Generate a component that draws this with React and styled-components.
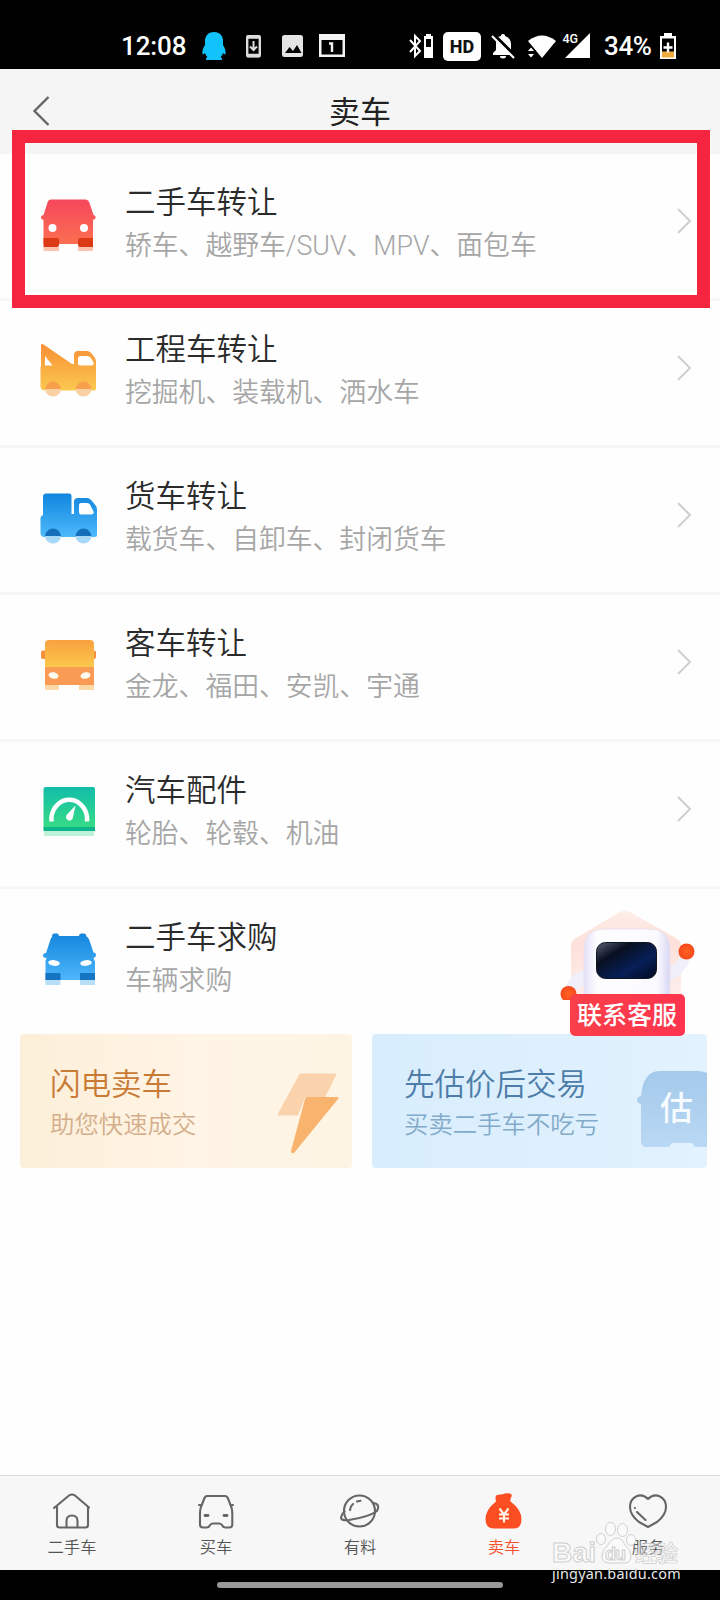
import React from 'react';
import styled, { createGlobalStyle } from 'styled-components';

const GlobalStyle = createGlobalStyle`
  body {
    margin: 0;
    background: #fefefe;
  }
  * {
    box-sizing: border-box;
  }
`;

const Screen = styled.div`
  position: relative;
  display: flex;
  flex-direction: column;
  width: 720px;
  height: 1600px;
  overflow: hidden;
  background: #fefefe;
  font-family: Roboto, 'Noto Sans CJK SC', sans-serif;
  white-space: nowrap;
`;

const StatusBar = styled.div`
  display: flex;
  align-items: center;
  flex: none;
  height: 69px;
  padding: 23px 0 0 121px;
  background: #000;
  color: #fff;
`;

const StatusText = styled.span`
  flex: none;
  width: ${props => props.width};
  margin-left: ${props => props.gap || 0};
  font-size: 26px;
  line-height: 46px;
  font-weight: 500;
  letter-spacing: ${props => props.spacing || 0};
`;

const Glyph = styled.svg`
  flex: none;
  display: block;
  margin-left: ${props => props.$gap || 0};
`;

const HdBadge = styled.span`
  flex: none;
  width: 38px;
  height: 29px;
  margin-left: 9px;
  border-radius: 5px;
  background: #fff;
  color: #111;
  font-size: 18px;
  line-height: 29px;
  font-weight: 800;
  text-align: center;
`;

const Header = styled.header`
  display: grid;
  grid-template-columns: 60px 1fr 60px;
  flex: none;
  height: 85px;
  background: #f5f5f5;
`;

const BackIcon = styled.svg`
  margin: 24px 0 0 30px;
`;

const PageTitle = styled.h1`
  margin: 24px 0 0;
  color: #222;
  font-size: 31px;
  line-height: 40px;
  font-weight: 400;
  text-align: center;
`;

const Row = styled.div`
  display: flex;
  flex: none;
  height: 147px;
  padding: 0 26px 0 38px;
  border-bottom: 3px solid ${props => props.last ? 'transparent' : '#f7f7f7'};
`;

const RowIcon = styled.svg`
  flex: none;
  width: 60px;
  height: 60px;
  margin-top: 41px;
`;

const RowText = styled.div`
  flex: 1;
  padding: 29px 0 0 27px;
`;

const RowTitle = styled.div`
  color: #2b2b2b;
  font-size: 30.5px;
  line-height: 40px;
  font-weight: 350;
`;

const RowSub = styled.div`
  margin-top: 3px;
  color: #a6a6a6;
  font-size: 26.8px;
  line-height: 40px;
  font-weight: 350;
`;

const Chevron = styled.svg`
  flex: none;
  margin-top: 52px;
`;

const Highlight = styled.div`
  position: absolute;
  left: 12px;
  top: 130px;
  width: 698px;
  height: 178px;
  border: 13px solid #f5253f;
`;

const Cards = styled.div`
  display: flex;
  gap: 20px;
  flex: none;
  padding: 0 13px 0 20px;
  margin-top: -2px;
`;

const Card = styled.div`
  display: flex;
  justify-content: space-between;
  width: ${props => props.width};
  height: 134px;
  padding-left: ${props => props.indent};
  border-radius: 4px;
  background: ${props => props.bg};
`;

const CardText = styled.div`
  padding-top: 30px;
`;

const CardTitle = styled.div`
  color: ${props => props.color};
  font-size: 30.5px;
  line-height: 42px;
  font-weight: 350;
`;

const CardSub = styled.div`
  color: ${props => props.color};
  font-size: 24.4px;
  line-height: 38px;
  font-weight: 350;
`;

const Service = styled.div`
  position: absolute;
  left: 550px;
  top: 900px;
  display: flex;
  flex-direction: column;
  align-items: center;
  width: 156px;
`;

const ServiceBadge = styled.div`
  width: 115px;
  height: 42px;
  margin: -6px 0 0 -2px;
  border-radius: 5px;
  background: linear-gradient(100deg, #f93f48, #ff344f);
  color: #fff;
  font-size: 25px;
  line-height: 43px;
  font-weight: 500;
  text-align: center;
`;

const TabBar = styled.nav`
  display: grid;
  grid-template-columns: repeat(5, 1fr);
  flex: none;
  height: 95px;
  margin-top: auto;
  border-top: 1px solid #dcdcdc;
  background: #f7f7f7;
`;

const Tab = styled.div`
  display: flex;
  flex-direction: column;
  align-items: center;
  padding-top: 15px;
  color: ${props => props.active ? '#f4502a' : '#555'};
  font-size: 16.3px;
  line-height: 24px;
  font-weight: 350;
`;

const TabIcon = styled.svg`
  width: 40px;
  height: 40px;
  margin-bottom: 5px;
  fill: none;
  stroke: #666;
  stroke-width: 2.1;
  stroke-linecap: round;
  stroke-linejoin: round;
`;

const HomeArea = styled.div`
  flex: none;
  display: flex;
  justify-content: center;
  height: 30px;
  padding-top: 12px;
  background: #000;
`;

const HomePill = styled.div`
  width: 286px;
  height: 6px;
  border-radius: 3px;
  background: #999;
`;

const Watermark = styled.div`
  position: absolute;
  left: 552px;
  top: 1520px;
  width: 130px;
`;

const WatermarkSvg = styled.svg`
  display: block;
  overflow: visible;
  font-family: 'Liberation Sans', 'Noto Sans CJK SC', sans-serif;
  font-weight: 700;
`;

const WatermarkUrl = styled.div`
  margin-top: -2px;
  color: #e8e8e8;
  font-family: 'Noto Sans', sans-serif;
  font-size: 14.4px;
  line-height: 20px;
  letter-spacing: 0.25px;
`;

const Gradient = ({ id, from, to }) => (
  <defs>
    <linearGradient id={id} x1='0' y1='0' x2='0' y2='1'>
      <stop offset='0' stopColor={from} />
      <stop offset='1' stopColor={to} />
    </linearGradient>
  </defs>
);

const RedCar = () => (
  <RowIcon viewBox='0 0 60 60'>
    <Gradient id='redCar' from='#f6475c' to='#fb6f51' />
    <path d='M5.500 52h15.500v4h-15.500zM40 52h15v4h-15z' fill='#fbb39c' opacity='.8' />
    <path d='M13 4.500h34q3.500 0 4.500 3.500l4 12q2.500.5 2 3-.4 2-2.500 1.500V49H5.500V24.500q-2 .5-2.500-1.500-.4-2.500 2.500-3L9.500 7.500q1-3 3.500-3z' fill='url(#redCar)' />
    <path d='M5.500 43H19q2 0 2 2v5q0 2-2 2H5.500zM55 43H42q-2 0-2 2v5q0 2 2 2h13z' fill='#dc3a14' />
    <circle cx='14.500' cy='33' r='4' fill='#fff' />
    <circle cx='46' cy='33' r='4' fill='#fff' />
  </RowIcon>
);

const CraneTruck = () => (
  <RowIcon viewBox='0 0 60 60'>
    <Gradient id='crane' from='#f88f35' to='#fbc94f' />
    <path fillRule='evenodd' d='M5.500 2.500q-2-1-2.500.5V24q-.5.5-.5 2v18q0 4 4 4.500H56q2 0 2-2V20q0-2-1-4l-3-4q-2-3-5-3H40q-4 0-4 4v9h-2zM7 14 14.500 23.500H7zM42.500 14h7q2 0 3 1.500l2.500 4q2 4-2 4H42q-2 0-2-2v-5q0-2.500 2.500-2.500z' fill='url(#crane)' />
    <path d='M7 48a8 8.500 0 0 1 16 0zM37.500 48a8 8.500 0 0 1 16 0z' fill='#f8a04e' />
    <path d='M7 47a8 7.500 0 0 0 16 0zM37.500 47a8 7.500 0 0 0 16 0z' fill='#fad0a5' />
  </RowIcon>
);

const BoxTruck = () => (
  <RowIcon viewBox='0 0 60 60'>
    <Gradient id='boxTruck' from='#0f85de' to='#4ebafb' />
    <path fillRule='evenodd' d='M8 4.500h23q2.500 0 2.500 3V25h2.500V13q0-4 4-4h9q3 0 5 3l4 5q1 1 1 4v25q0 2-2 2H6.500q-4 0-4-4V29q0-2 2.500-3V8q0-3.500 3-3.500zM43 14q-2 0-2 2v7q0 2.500 2 2.500h10q4 0 2-4l-3-6q-1-1.500-3-1.500z' fill='url(#boxTruck)' />
    <path d='M7 48a8 8.500 0 0 1 16 0zM37.500 48a8 8.500 0 0 1 16 0z' fill='#136fb8' />
    <path d='M7 47a8 7.500 0 0 0 16 0zM37.500 47a8 7.500 0 0 0 16 0z' fill='#a8d8f7' />
  </RowIcon>
);

const Bus = () => (
  <RowIcon viewBox='0 0 60 60'>
    <Gradient id='bus' from='#f9a13e' to='#fbc84d' />
    <path d='M3 16q0-1.500 2-1.500h50q3 0 3 1.500v5q0 2-3 2H5q-2 0-2-2z' fill='#f9903f' />
    <path d='M7 48h14v6H7zM41 48h15v6H41z' fill='#fcd9a6' />
    <path d='M11 4h41q4 0 4 4v23H7V8q0-4 4-4z' fill='url(#bus)' />
    <path d='M7 31h49v18H7z' fill='#f99b55' />
    <ellipse cx='15.500' cy='39.500' rx='5' ry='3.200' fill='#fffaf0' transform='rotate(12 15.500 39.500)' />
    <ellipse cx='47.500' cy='39.500' rx='5' ry='3.200' fill='#fffaf0' transform='rotate(-12 47.500 39.500)' />
  </RowIcon>
);

const Gauge = () => (
  <RowIcon viewBox='0 0 60 60'>
    <Gradient id='gauge' from='#12bda9' to='#37dc85' />
    <path d='M6 48h50v5H6z' fill='#bdf1d8' />
    <path d='M8 4h47q2 0 2 2v39H5.500V6q0-2 2.500-2z' fill='url(#gauge)' />
    <path d='M5.500 44H57v4H5.500z' fill='#0fb58a' />
    <path d='M13.500 38.500v-5a18 20 0 0 1 35.500 0v5' fill='none' stroke='#fff' strokeWidth='4.500' />
    <path d='M37.500 22.500 35 34a3.500 3.500 0 1 1-6-2.500z' fill='#fff' />
  </RowIcon>
);

const BlueCar = () => (
  <RowIcon viewBox='0 0 60 60'>
    <Gradient id='blueCar' from='#1386dd' to='#4eb6fb' />
    <path d='M7.500 50h15v5h-15zM42 50h15v5H42z' fill='#b9def7' />
    <path d='M16 3.500h3q2 0 2 2.500h20q0-2.500 2-2.500h3q2 0 2.500 3 2 1 3 4l4 12q2.500 0 2.500 2.500T55.500 28l1.500 4v18H7.500V31l1-3Q5 28 5 25.500T8 23l4-12q1-3.500 2-4 0-3.500 2-3.500z' fill='url(#blueCar)' />
    <path d='M7.500 43h14q1 0 1 1v6h-15zM42 43h15v7H42z' fill='#1675c2' />
    <ellipse cx='16' cy='33' rx='5.800' ry='2.800' fill='#fff' transform='rotate(8 16 33)' />
    <ellipse cx='48' cy='33' rx='5.800' ry='2.800' fill='#fff' transform='rotate(-8 48 33)' />
  </RowIcon>
);

const rows = [
  { title: '二手车转让', sub: '轿车、越野车/SUV、MPV、面包车', Icon: RedCar },
  { title: '工程车转让', sub: '挖掘机、装载机、洒水车', Icon: CraneTruck },
  { title: '货车转让', sub: '载货车、自卸车、封闭货车', Icon: BoxTruck },
  { title: '客车转让', sub: '金龙、福田、安凯、宇通', Icon: Bus },
  { title: '汽车配件', sub: '轮胎、轮毂、机油', Icon: Gauge },
  { title: '二手车求购', sub: '车辆求购', Icon: BlueCar, last: true },
];

const ListRow = ({ title, sub, Icon, last }) => (
  <Row last={last}>
    <Icon />
    <RowText>
      <RowTitle>{title}</RowTitle>
      <RowSub>{sub}</RowSub>
    </RowText>
    {last ? null : (
      <Chevron width='18' height='30' viewBox='0 0 18 30'>
        <path d='M2 3 14 15 2 27' fill='none' stroke='#cfcfcf' strokeWidth='2' />
      </Chevron>
    )}
  </Row>
);

const Status = () => (
  <StatusBar>
    <StatusText width='66px' spacing='-0.1px'>12:08</StatusText>
    <Glyph $gap='15px' width='24' height='30' viewBox='202 31 24 30'>
      <path d='M214 32c-6 0-9 4-9 9v4c-2 3-3 6-2.500 9 .5 1 1.500 0 2.500-1 .5 2 1.500 3 2.500 4-2 1-2.500 3 0 3h13c2.500 0 2-2 0-3 1-1 2-2 2.500-4 1 1 2 2 2.500 1 .5-3-.5-6-2.500-9v-4c0-5-3-9-9-9z' fill='#12c3fb' />
    </Glyph>
    <Glyph $gap='20px' width='16' height='30' viewBox='246 31 16 30'>
      <rect x='247.200' y='36.200' width='12.600' height='20' rx='1' fill='none' stroke='#ddd' strokeWidth='2.400' />
      <path d='M247 37h13M247 55.500h13' stroke='#ddd' strokeWidth='3.500' />
      <path d='M253.500 41v8M250 46.500l3.500 3.500 3.500-3.500' stroke='#ddd' strokeWidth='2' fill='none' />
    </Glyph>
    <Glyph $gap='20px' width='22' height='30' viewBox='282 31 22 30'>
      <rect x='282' y='35' width='21' height='22' rx='2.500' fill='#e4e4e4' />
      <path d='m285 53 4.500-6 3.500 4 4-6 4.500 8z' fill='#000' />
    </Glyph>
    <Glyph $gap='15px' width='26' height='30' viewBox='319 31 26 30'>
      <path fillRule='evenodd' d='M319 34h26v23h-26zM321.500 40v14.500h21V40z' fill='#f2f2f2' />
      <path d='M329 43.500h3V52' stroke='#f2f2f2' strokeWidth='2.400' fill='none' />
    </Glyph>
    <Glyph $gap='63px' width='26' height='30' viewBox='408 31 26 30'>
      <path d='m410 40 10 11-5 5V36l5 5-10 11' fill='none' stroke='#fff' strokeWidth='2' />
      <path d='M426 34h5v2h2v22h-9V36h2zM426 39v8h5v-8z' fill='#fff' fillRule='evenodd' />
    </Glyph>
    <HdBadge>HD</HdBadge>
    <Glyph $gap='10px' width='26' height='30' viewBox='491 31 26 30'>
      <path d='M496 39q2-3 5-3v-1q2-2 4 0v1q6 2 6 9v7l2 3h-20v-2l3-3v-7q0-2 .7-3zM500 56h6q0 2.500-3 2.500t-3-2.500' fill='#fff' />
      <path d='m493.500 34.500 22 22' stroke='#000' strokeWidth='3.500' />
      <path d='m492 36 22 22' stroke='#fff' strokeWidth='2.200' />
    </Glyph>
    <Glyph $gap='10px' width='30' height='30' viewBox='527 31 30 30'>
      <path d='M528 41q14-11 28 0l-14 17z' fill='#fff' />
      <path d='m527 51 4.500-5 4.500 5v3l-4.500 5-4.500-5z' fill='#000' />
      <path d='m528 51 3-3.500 3 3.500zM528 54h6l-3 3.500z' fill='#fff' />
    </Glyph>
    <Glyph $gap='5px' width='30' height='30' viewBox='562 31 30 30'>
      <path d='M590 33v25h-25z' fill='#fff' />
      <text x='562.500' y='43' fontSize='12.500' fontWeight='500' fill='#fff' stroke='#000' strokeWidth='2' paintOrder='stroke'>4G</text>
    </Glyph>
    <StatusText width='50px' gap='12px' spacing='-0.4px'>34%</StatusText>
    <Glyph $gap='5px' width='18' height='30' viewBox='659 31 18 30'>
      <path d='M664 33h8v3h4v23h-16V36h4zM662 38.500V57h12V38.500z' fill='#fff' fillRule='evenodd' />
      <path d='M662 51.500h12v6h-12z' fill='#efaa3c' />
      <path d='M668 42.500v10M663.500 47.500h9' stroke='#fff' strokeWidth='2.400' />
    </Glyph>
  </StatusBar>
);

const Robot = () => (
  <svg width='156' height='100' viewBox='550 900 156 100'>
    <defs>
      <linearGradient id='head' x1='0' y1='0' x2='1' y2='0'>
        <stop offset='0' stopColor='#e3e1f7' />
        <stop offset='.15' stopColor='#fdfdff' />
        <stop offset='.85' stopColor='#fbfaff' />
        <stop offset='1' stopColor='#d7d7f5' />
      </linearGradient>
      <linearGradient id='visor' x1='0' y1='0' x2='1' y2='1'>
        <stop offset='0' stopColor='#5b6375' />
        <stop offset='.3' stopColor='#080f20' />
        <stop offset='.65' stopColor='#071f58' />
        <stop offset='1' stopColor='#020a20' />
      </linearGradient>
      <radialGradient id='hand'>
        <stop offset='0' stopColor='#ff6323' />
        <stop offset='1' stopColor='#f5481b' />
      </radialGradient>
      <linearGradient id='halo' x1='0' y1='0' x2='0' y2='1'>
        <stop offset='0' stopColor='#fdeee9' />
        <stop offset='.4' stopColor='#fde0d9' />
        <stop offset='1' stopColor='#fdeeea' />
      </linearGradient>
    </defs>
    <path d='M620 912q5-3 10 0l46 26q5 3 5 7v49H571v-49q0-4 5-7z' fill='url(#halo)' />
    <path d='M564 993q3-18 21-24v15q-9 4-12 14zM691 954q-3 18-21 27v-15q9-4 12-14z' fill='#f1eff9' />
    <path d='M584 1000v-51q0-20 20-20h46q20 0 20 20v51z' fill='url(#head)' stroke='#ecdfea' />
    <rect x='596.500' y='942.500' width='60' height='36' rx='9' fill='url(#visor)' stroke='#101522' />
    <circle cx='686.500' cy='951.500' r='8' fill='url(#hand)' />
    <circle cx='568.500' cy='994' r='8' fill='url(#hand)' />
  </svg>
);

const App = () => (
  <>
    <GlobalStyle />
    <Screen>
      <Status />
      <Header>
        <BackIcon width='24' height='34' viewBox='30 93 24 34'>
          <path d='M48.500 97 34.500 111l14 14' fill='none' stroke='#666' strokeWidth='2.400' />
        </BackIcon>
        <PageTitle>卖车</PageTitle>
      </Header>
      {rows.map(row => <ListRow key={row.title} {...row} />)}
      <Cards>
        <Card width='332px' indent='30px' bg='linear-gradient(90deg, #fcefd9, #fff4e5 50%, #fef4e4)'>
          <CardText>
            <CardTitle color='#c97a35'>闪电卖车</CardTitle>
            <CardSub color='#d4ae8b'>助您快速成交</CardSub>
          </CardText>
          <svg width='74' height='134' viewBox='278 1034 74 134'>
            <path d='M299 1075q1-1.500 2-1.500h34q2 0 1 2l-11 22h-20l-7 18h-19q-2 0-1-2z' fill='#fad2ac' />
            <path d='M307 1097h30q2.500 0 1 2l-44 54q-3 1-3-2l14-52q1-2 2-2z' fill='#f8b36f' />
          </svg>
        </Card>
        <Card width='335px' indent='32px' bg='linear-gradient(90deg, #d8edfd, #e2f2fe)'>
          <CardText>
            <CardTitle color='#4d7da8'>先估价后交易</CardTitle>
            <CardSub color='#83abc9'>买卖二手车不吃亏</CardSub>
          </CardText>
          <svg width='72' height='134' viewBox='635 1034 72 134'>
            <Gradient id='valuation' from='#a4c9ea' to='#b9d8f4' />
            <path d='M707 1073q-4-2-10-2h-38q-10 0-15 11-2 5-3 14-4 1-4 4t4 4v37q0 6 6 6h22l3-4h20l3 4h12z' fill='url(#valuation)' />
            <text x='660' y='1120' fontSize='33' fontWeight='500' fill='#f5fbff'>估</text>
          </svg>
        </Card>
      </Cards>
      <TabBar>
        <Tab>
          <TabIcon viewBox='52 1491 40 40'>
            <path d='M54 1508 69 1495.500q3-2 6 0L89 1507.500M57 1507v18q0 2.500 2.500 2.500h26q2.500 0 2.500-2.500v-18M66.500 1527v-6q0-5.500 5.500-5.500t5.500 5.500v6' />
          </TabIcon>
          二手车
        </Tab>
        <Tab>
          <TabIcon viewBox='196 1491 40 40'>
            <path d='M207 1496h18q2 0 3 2.500l3.500 9q.8 3 .8 6v11q0 3-3 3h-4q-2 0-3-2t-3-2h-6.500q-2 0-3 2t-3 2H203q-3 0-3-3v-11q0-3 .8-6l3.500-9q1-2.500 2.700-2.500zM199 1505h2.500M230.500 1505h2.500' />
            <path d='M205 1515.500h3M224 1515.500h3' strokeWidth='2.800' />
          </TabIcon>
          买车
        </Tab>
        <Tab>
          <TabIcon viewBox='340 1491 40 40'>
            <circle cx='359.500' cy='1511' r='15.500' />
            <path d='M344.500 1511.500q-3 2-3.500 6 0 3.500 8 2.500 20-3 28-9 3.500-7-3.500-8M350 1510q.5-4 3-6M357 1501.500l3.500-.8' />
          </TabIcon>
          有料
        </Tab>
        <Tab active>
          <TabIcon viewBox='484 1491 40 40'>
            <path d='M496 1495.500q3-1.500 6-1 4-2 8-1 3 1 1 4-1 3-.5 4 11 8 11 18 0 9-8 9h-19q-9 0-9-9 0-10 10.500-18-1-4 0-6z' fill='#fb4f23' stroke='none' />
            <path d='m499.500 1508.500 4.500 6 4.500-6M504 1514.500v8M499 1514.500h10M499 1518.500h10' stroke='#fff4e8' strokeLinecap='butt' />
          </TabIcon>
          卖车
        </Tab>
        <Tab>
          <TabIcon viewBox='628 1491 40 40'>
            <path d='M648 1499q-5-5-11-3-7 3-7 11 0 8 9 15l9 5 9-5q9-7 9-15 0-8-7-11-6-2-11 3zM637 1512l8.500 8M634.800 1508h.2' />
          </TabIcon>
          服务
        </Tab>
      </TabBar>
      <HomeArea>
        <HomePill />
      </HomeArea>
      <Highlight />
      <Service>
        <Robot />
        <ServiceBadge>联系客服</ServiceBadge>
      </Service>
      <Watermark>
        <WatermarkSvg width='130' height='46' viewBox='552 1520 130 46'>
          <g fill='#fafafa' stroke='#cfcfcf' strokeWidth='1'>
            <text x='552' y='1562' fontSize='28' textLength='44' lengthAdjust='spacingAndGlyphs'>Bai</text>
            <ellipse cx='601' cy='1539' rx='4.500' ry='5.500' />
            <ellipse cx='610.500' cy='1529' rx='5' ry='6.500' />
            <ellipse cx='622.500' cy='1530' rx='5' ry='6.500' />
            <ellipse cx='631' cy='1540' rx='4.500' ry='5.500' />
            <path d='M617 1538q5 0 8 7 6 5 6 11 0 7-7 7h-15q-7 0-7-7 0-6 6-11 4-7 9-7z' />
            <text x='605' y='1560' fontSize='18' textLength='21'>du</text>
            <text x='635' y='1561' fontSize='22' textLength='43' fillOpacity='.2' strokeWidth='.7'>经验</text>
          </g>
        </WatermarkSvg>
        <WatermarkUrl>jingyan.baidu.com</WatermarkUrl>
      </Watermark>
    </Screen>
  </>
);

export default App;
